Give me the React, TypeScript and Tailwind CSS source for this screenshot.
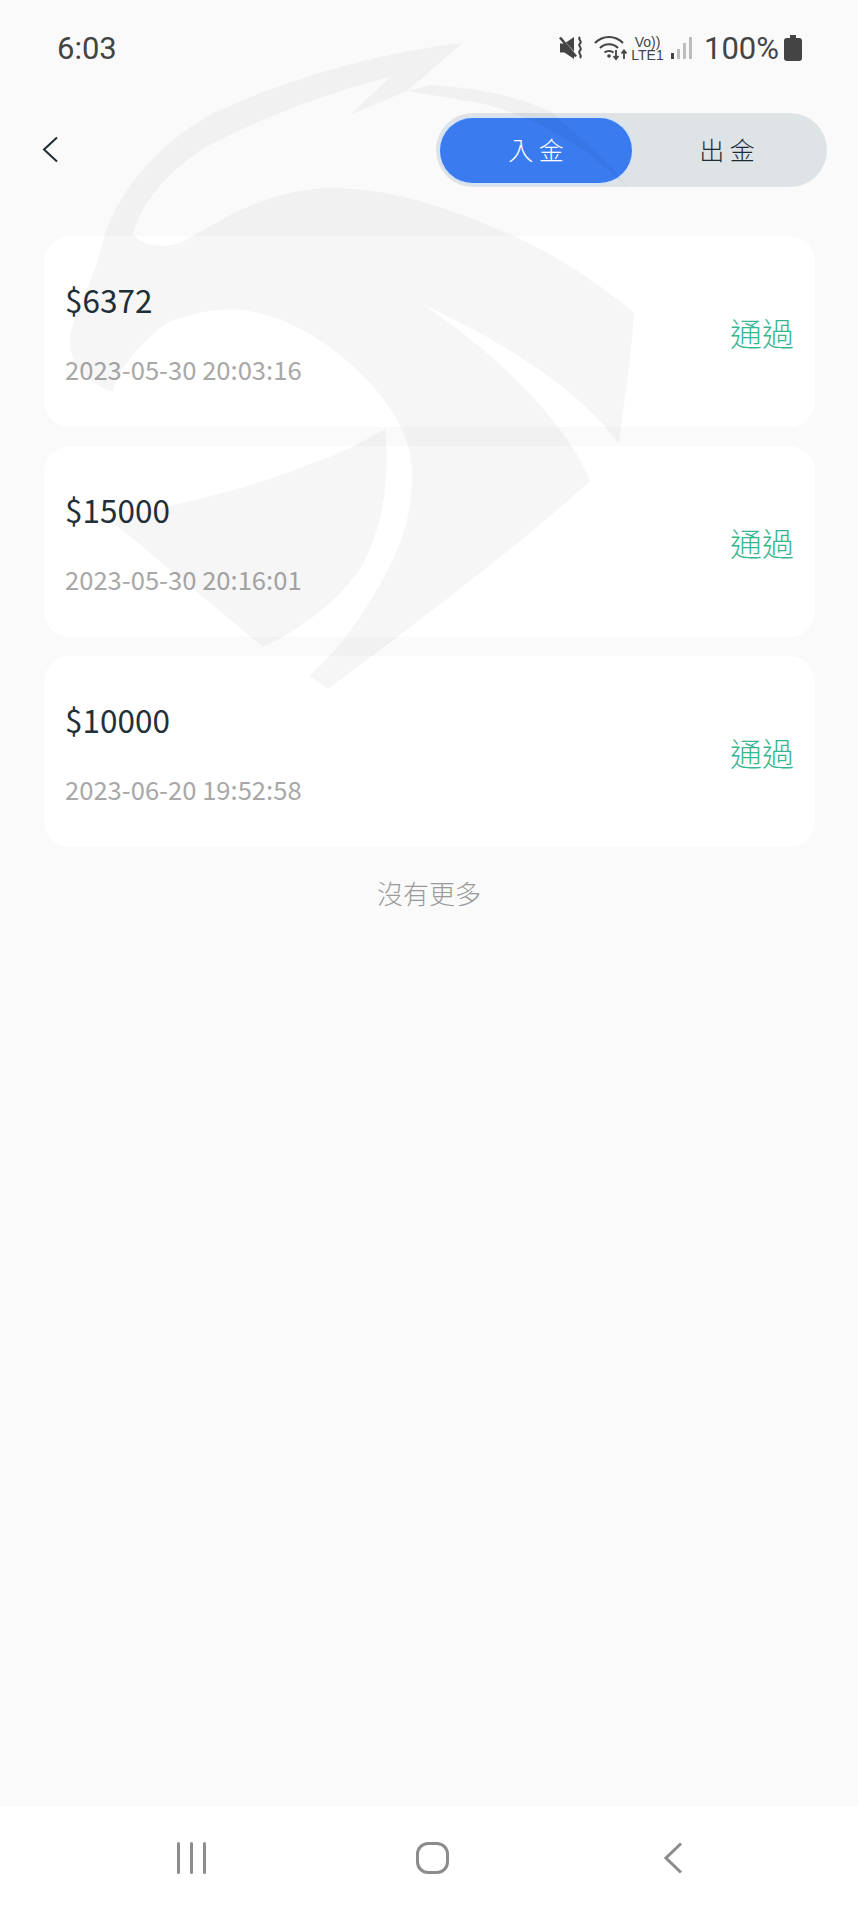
const cjk = "font-['Noto_Sans_CJK_TC','Noto_Sans_CJK_SC',sans-serif]";

const records = [
  { amount: '$6372', time: '2023-05-30 20:03:16' },
  { amount: '$15000', time: '2023-05-30 20:16:01' },
  { amount: '$10000', time: '2023-06-20 19:52:58' },
];

function MuteIcon() {
  return (
    <svg width="25" height="24" viewBox="0 0 25 24" className="shrink-0">
      <path d="M1 7.500h4.500L15 1v22l-9.500-6.500H1z" fill="#444" />
      <path d="M-1 3L16 22" stroke="#fafafa" strokeWidth="1.500" transform="translate(2.500 -1.500)" />
      <path d="M1 1.500L17 20.500" stroke="#444" strokeWidth="2.600" />
      <path d="M21 1c-3 3 3 4 0 6.500s3 4 0 7 3 4 0 7.500" fill="none" stroke="#444" strokeWidth="2" />
    </svg>
  );
}

function WifiIcon() {
  return (
    <svg width="34" height="26" viewBox="0 0 34 26" className="shrink-0">
      <g fill="none" stroke="#444" strokeWidth="2.200">
        <path d="M1 8c8-8 20-8 28 0" />
        <path d="M6 13c5-5 13-5 18 0" />
        <path d="M10.500 17.500c2.500-2 6.500-2 9 0" />
      </g>
      <circle cx="15" cy="21" r="1.800" fill="#444" />
      <path d="M22 15v9M19.500 21l2.500 3 2.500-3" fill="none" stroke="#444" strokeWidth="1.800" />
      <path d="M30 24v-8M27.500 18.500l2.500-3 2.500 3" fill="none" stroke="#444" strokeWidth="1.800" />
    </svg>
  );
}

function SignalIcon() {
  return (
    <svg width="22" height="24" viewBox="0 0 22 24" className="shrink-0">
      <rect x="0" y="17" width="3" height="6" fill="#444" />
      <rect x="6" y="13" width="3" height="10" fill="#bdbdbd" />
      <rect x="12" y="7" width="3" height="16" fill="#bdbdbd" />
      <rect x="18" y="1" width="3" height="22" fill="#bdbdbd" />
    </svg>
  );
}

function BatteryIcon() {
  return (
    <svg width="18" height="26" viewBox="0 0 18 26" className="shrink-0">
      <path d="M6 0h6v3h3a3 3 0 0 1 3 3v17a3 3 0 0 1-3 3H3a3 3 0 0 1-3-3V6a3 3 0 0 1 3-3h3z" fill="#444" />
    </svg>
  );
}

// faint logo that sits over the whole top of the page
function Watermark() {
  return (
    <svg width="858" height="760" viewBox="0 0 858 760" className="absolute left-0 top-0 pointer-events-none">
      <path
        fill="#000"
        fillOpacity="0.035"
        d="M463 43C380 52 290 78 213 113C165 140 125 180 105 233L133 233C145 195 175 165 213 143C270 115 330 92 390 77L350 115L407 91Z
           M407 91L430 85C480 88 520 97 552 112C570 130 610 160 630 190C590 150 540 118 480 103Z
           M105 233C95 280 75 310 70 335C68 360 80 380 113 392C118 365 150 335 167 323C195 312 220 308 240 310C300 315 370 370 397 420C410 445 412 460 412 472C412 510 405 530 397 550C375 600 340 650 309 676L328 689C420 620 520 545 590 481C575 440 520 370 424 305C500 340 580 390 617 442L619 442C625 400 632 350 634 312C600 285 560 255 500 230C440 205 390 188 330 188C260 190 215 225 183 241C165 250 140 246 133 233Z
           M385 429C390 470 385 530 358 572C330 610 290 635 263 647L110 520C150 510 250 490 309 464C340 455 365 440 385 429Z"
      />
    </svg>
  );
}

export default function App() {
  return (
    <div className={`relative flex h-[1907px] w-[858px] flex-col overflow-hidden bg-[#fafafa] ${cjk}`}>
      {/* status bar */}
      <div className="flex h-[96px] items-center justify-between pl-[57px] pr-[56px] font-['Roboto',sans-serif] text-[#444444]">
        <span className="text-[31px] leading-none">6:03</span>
        <div className="flex items-center">
          <MuteIcon />
          <div className="ml-[10px]"><WifiIcon /></div>
          <div className="ml-[3px] flex w-[33px] flex-col items-center font-['Liberation_Sans',sans-serif] leading-none">
            <span className="text-[14px] leading-[14px]">Vo))</span>
            <span className="text-[14px] leading-[13px]">LTE1</span>
          </div>
          <div className="ml-[7px]"><SignalIcon /></div>
          <span className="ml-[11px] text-[31px] leading-none">100%</span>
          <div className="ml-[5px]"><BatteryIcon /></div>
        </div>
      </div>

      {/* toolbar */}
      <div className="mt-[17px] flex h-[74px] items-center justify-between pl-[42px] pr-[31px]">
        <svg width="17" height="27" viewBox="0 0 17 27" className="mb-[2px]">
          <path d="M15 1.500L2 13.500L15 25.500" fill="none" stroke="#1d2b33" strokeWidth="2" />
        </svg>
        <div className="flex h-[74px] w-[391px] items-center rounded-full bg-[#dee3e6] pl-[4px] pr-[5px]">
          <div className="flex h-[65px] w-[192px] items-center justify-center rounded-full bg-[#3a7bef] text-[25px] font-light text-white ring-2 ring-[#d5e3f5]">入 金</div>
          <div className="flex h-[65px] flex-1 items-center justify-center text-[25px] font-light text-[#1d2b33]">出 金</div>
        </div>
      </div>

      {/* records */}
      <div className="mt-[49px] flex flex-col gap-[19px] pl-[44px] pr-[43px]">
        {records.map((r) => (
          <div key={r.time} className="flex h-[191px] items-center justify-between rounded-[26px] bg-white pl-[21px] pr-[21px]">
            <div className="flex flex-col">
              <span className="text-[31.5px] leading-[44px] text-[#22303a]">{r.amount}</span>
              <span className="mt-[30px] text-[25.6px] leading-[36px] text-[#a8a8a8]">{r.time}</span>
            </div>
            <span className="text-[32px] font-light text-[#38b692]">通過</span>
          </div>
        ))}
      </div>

      <div className="mt-[28px] text-center text-[26px] font-light leading-[36px] text-[#9a9a9a]">沒有更多</div>

      {/* nav bar */}
      <div className="mt-auto flex h-[101px] items-start bg-white pt-[36px]">
        <div className="flex w-full items-center justify-between pl-[177px] pr-[175px]">
          <div className="flex h-[32px] w-[29px] justify-between">
            <div className="w-[3px] rounded-full bg-[#8c8c8c]" />
            <div className="w-[3px] rounded-full bg-[#8c8c8c]" />
            <div className="w-[3px] rounded-full bg-[#8c8c8c]" />
          </div>
          <div className="mr-[5px] h-[32px] w-[33px] rounded-[12px] border-[3px] border-[#8c8c8c]" />
          <svg width="19" height="32" viewBox="0 0 19 32">
            <path d="M17 1.500L2 16L17 30.500" fill="none" stroke="#8c8c8c" strokeWidth="3" />
          </svg>
        </div>
      </div>

      <Watermark />
    </div>
  );
}
